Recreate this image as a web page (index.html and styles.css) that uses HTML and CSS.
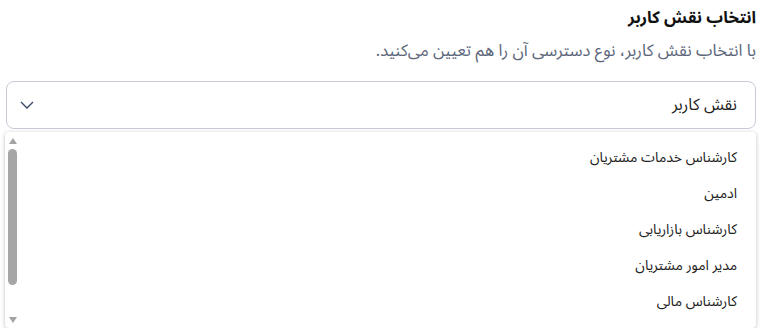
FILE: index.html
```html
<!DOCTYPE html>
<html lang="fa" dir="rtl">
<head>
    <meta charset="UTF-8">
    <meta name="viewport" content="width=device-width, initial-scale=1.0">
    <title>انتخاب نقش کاربر</title>
    <link rel="stylesheet" href="styles.css">
</head>
<body>
    <div class="role-field">
        <h3 class="role-title">انتخاب نقش کاربر</h3>
        <p class="role-hint">با انتخاب نقش کاربر، نوع دسترسی آن را هم تعیین می‌کنید.</p>

        <div class="select-box">
            <span class="select-value">نقش کاربر</span>
            <svg class="chevron" width="14" height="8" viewBox="0 0 14 8">
                <path d="M1 1 L7 7 L13 1" fill="none" stroke="#3b4a66" stroke-width="1.4"/>
            </svg>
        </div>

        <div class="select-menu">
            <ul class="menu-list">
                <li>کارشناس خدمات مشتریان</li>
                <li>ادمین</li>
                <li>کارشناس بازاریابی</li>
                <li>مدیر امور مشتریان</li>
                <li>کارشناس مالی</li>
            </ul>
            <!-- scrollbar drawn by hand, headless shots hide the real one -->
            <div class="fake-scroll">
                <span class="arrow-up"></span>
                <span class="thumb"></span>
                <span class="arrow-down"></span>
            </div>
        </div>
    </div>
</body>
</html>
```

FILE: styles.css
```css
body{
  margin: 0;
  background: #fff;
  font-family: "Noto Sans Arabic", "Noto Sans", "DejaVu Sans", sans-serif;
}

.role-field{
  padding: 6px 6px 0 5px;
}

.role-title{
  margin: 0;
  font-size: 16.6px;
  font-weight: 700;
  color: #111;
  line-height: 24px;
}

.role-hint{
  margin: 10px 0 0;
  font-size: 16.6px;
  color: #5c667a;
  line-height: 22px;
}

.select-box{
  margin: 19px 0 0 1px;
  height: 46px;
  border: 1px solid #c7cbd8;
  border-radius: 8px;
  display: flex;
  align-items: center;
  justify-content: space-between;
  padding: 0 18px 0 13px;
}

.select-value{
  font-size: 16.3px;
  color: #222;
}

.select-menu{
  position: relative;
  margin-top: 3px;
  height: 196px;
  overflow: hidden;
  background: #fff;
  border-radius: 4px;
  box-shadow: 0 1px 4px rgba(0,0,0,0.25);
}

.menu-list{
  list-style: none;
  margin: 0;
  padding: 8px 0;
}

.menu-list li{
  height: 36px;
  line-height: 36px;
  padding: 0 19px;
  font-size: 14px;
  color: #222;
}

.fake-scroll{
  position: absolute;
  left: 3px;
  top: 0;
  bottom: 0;
  width: 9px;
  display: flex;
  flex-direction: column;
  align-items: center;
  padding: 6px 0 5px;
  box-sizing: border-box;
}

.arrow-up{
  width: 0;
  height: 0;
  border-left: 4.5px solid transparent;
  border-right: 4.5px solid transparent;
  border-bottom: 6px solid #a3a3a3;
}

.thumb{
  width: 9px;
  height: 136px;
  margin-top: 5px;
  background: #a6a6a6;
  border-radius: 5px;
}

.arrow-down{
  width: 0;
  height: 0;
  margin-top: auto;
  border-left: 4.5px solid transparent;
  border-right: 4.5px solid transparent;
  border-top: 6px solid #a3a3a3;
}
```
